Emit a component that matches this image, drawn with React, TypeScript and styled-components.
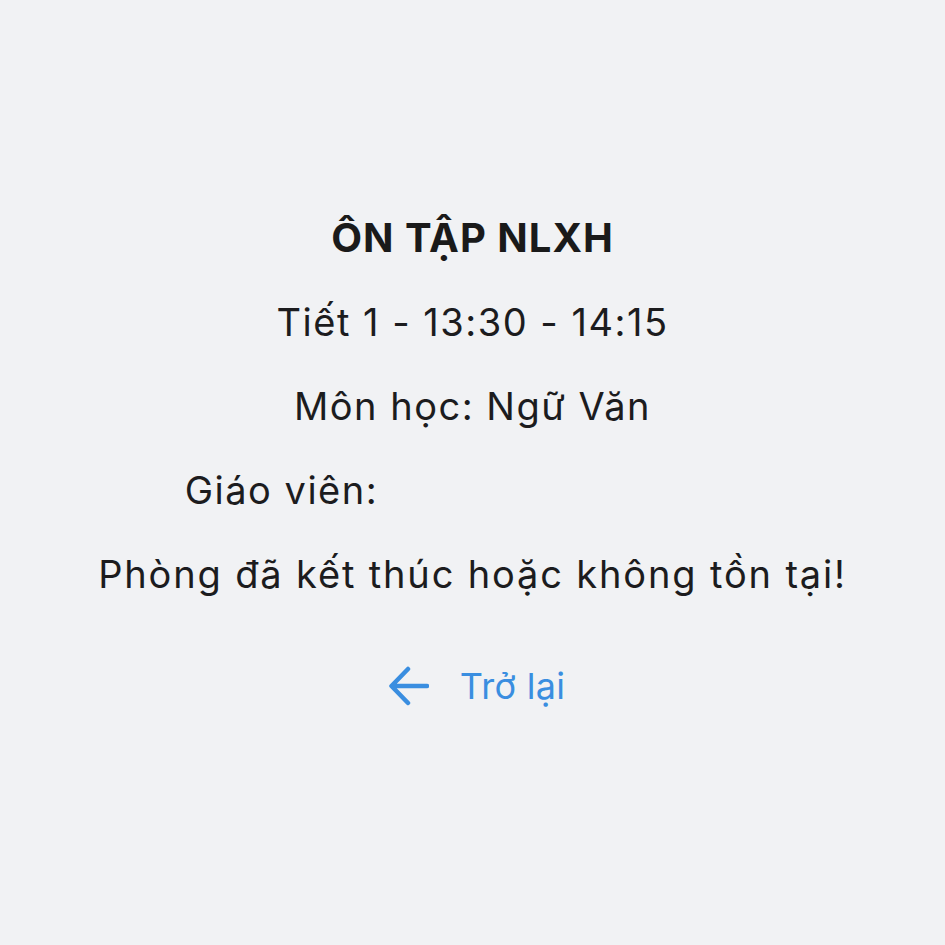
import React from "react";
import styled, { createGlobalStyle } from "styled-components";

const Global = createGlobalStyle`
  html, body { margin: 0; padding: 0; background: #f1f2f4; }
  body { font-family: Inter, "Noto Sans", sans-serif; color: #1c1c1e; }
`;

const Page = styled.div`
  width: 945px;
  height: 945px;
  display: flex;
  flex-direction: column;
  align-items: center;
  padding-top: 196px;
  box-sizing: border-box;
`;

const Title = styled.h1`
  margin: 0;
  font-size: 40px;
  font-weight: 700;
  line-height: 84px;
  letter-spacing: 1px;
  color: #1a1a1a;
`;

const Line = styled.p<{ $spacing?: number }>`
  margin: 0;
  font-size: 38px;
  font-weight: 400;
  line-height: 84px;
  letter-spacing: ${(p) => p.$spacing ?? 1.5}px;
  color: #1c1c1e;
  white-space: nowrap;
`;

const Blank = styled.span`
  display: inline-block;
  width: 370px;
`;

const Back = styled.a`
  margin-top: 28px;
  padding-left: 9px;
  display: flex;
  align-items: center;
  gap: 31px;
  color: #3a8ee0;
  font-size: 36px;
  line-height: 84px;
  letter-spacing: 0.3px;
  text-decoration: none;
  cursor: pointer;
`;

const ArrowIcon = () => (
  <svg width="40" height="40" viewBox="0 0 40 40" fill="none">
    <path
      d="M38 20H3M19 3L2.5 20 19 37"
      stroke="#3a8ee0"
      strokeWidth="4.5"
      strokeLinecap="round"
      strokeLinejoin="round"
    />
  </svg>
);

export default function App() {
  return (
    <>
      <Global />
      <Page>
        <Title>ÔN TẬP NLXH</Title>
        <Line>Tiết 1 - 13:30 - 14:15</Line>
        <Line>Môn học: Ngữ Văn</Line>
        <Line>
          Giáo viên: <Blank />
        </Line>
        <Line $spacing={1.85}>Phòng đã kết thúc hoặc không tồn tại!</Line>
        <Back>
          <ArrowIcon />
          <span>Trở lại</span>
        </Back>
      </Page>
    </>
  );
}
